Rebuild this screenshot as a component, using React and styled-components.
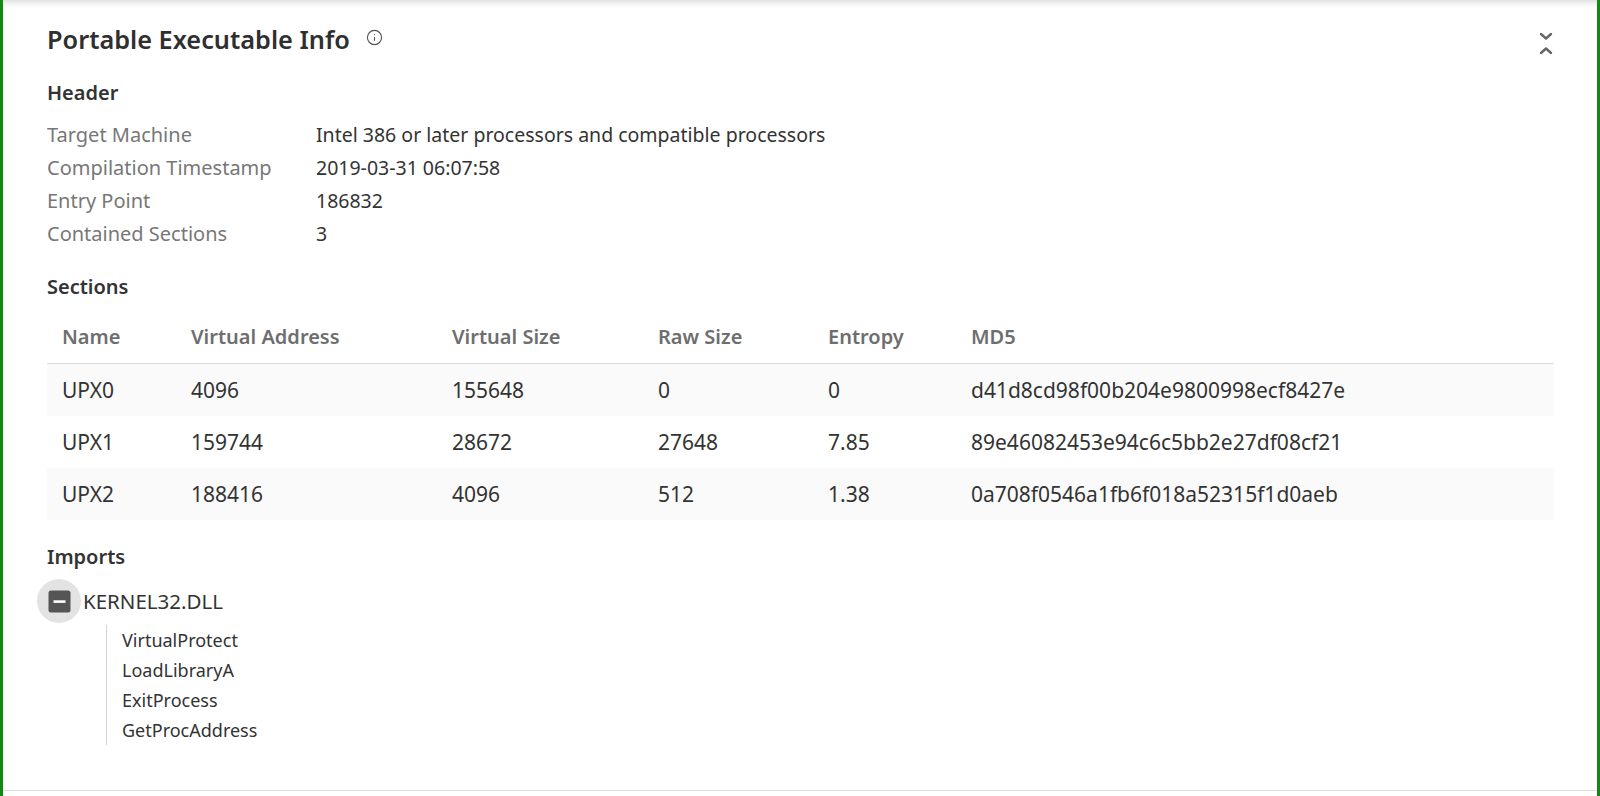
import React from 'react';
import styled, {createGlobalStyle} from 'styled-components';
import {Info} from 'lucide-react';

const GlobalStyle = createGlobalStyle`
  body {
    margin: 0;
    background: #fff;
    font-family: "Noto Sans", "Open Sans", sans-serif;
    color: #333;
  }
  * { box-sizing: border-box; }
`;

const Page = styled.div`
  height: 796px;
  border-left: 3px solid #118a11;
  border-right: 3px solid #118a11;
  overflow: hidden;
`;

const Card = styled.section`
  height: 791px;
  padding: 23px 43px 0 44px;
  border-bottom: 1px solid #dcdcdc;
  box-shadow: inset 0 7px 7px -5px rgba(0, 0, 0, 0.16);
`;

const TitleRow = styled.div`
  display: flex;
  align-items: flex-start;
  justify-content: space-between;
  height: 32px;
`;

const Title = styled.h2`
  display: flex;
  align-items: center;
  gap: 16px;
  margin: 0;
  font-size: 25.3px;
  line-height: 32px;
  font-weight: 600;
  color: #2f2f2f;
`;

const InfoIcon = styled(Info)`
  color: #555;
  margin-top: -4px;
`;

const Toggle = styled.button`
  border: none;
  background: none;
  padding: 0;
  margin-top: 7px;
  display: flex;
  cursor: pointer;
`;

const SectionTitle = styled.h3`
  margin: ${(p) => p.$top}px 0 0;
  font-size: 20px;
  line-height: 26px;
  font-weight: 600;
  color: #333;
`;

const InfoList = styled.dl`
  margin: 12px 0 0;
`;

const InfoRow = styled.div`
  display: grid;
  grid-template-columns: 269px 1fr;
  height: 33px;
  align-items: center;
`;

const Label = styled.dt`
  font-size: 20px;
  color: #777;
`;

const Value = styled.dd`
  margin: 0;
  font-size: 19.5px;
  color: #333;
`;

const Table = styled.div`
  margin-top: 9px;
`;

const TableRow = styled.div`
  display: grid;
  grid-template-columns: 129px 261px 206px 170px 143px 1fr;
  align-items: center;
  height: ${(p) => (p.$head ? '55px' : '52px')};
  background: ${(p) => (p.$shade ? '#fafafa' : '#fff')};
  border-bottom: ${(p) => (p.$head ? '1px solid #dedede' : 'none')};
  font-size: ${(p) => (p.$head ? '20px' : '21px')};
  color: ${(p) => (p.$head ? '#6e6e6e' : '#333')};
  font-weight: ${(p) => (p.$head ? 600 : 400)};
`;

const Cell = styled.div`
  padding-left: 15px;
`;

const ImportHead = styled.div`
  display: flex;
  align-items: center;
  margin: 9px 0 0 -10px;
  font-size: 20.5px;
  color: #333;
`;

const CircleButton = styled.button`
  width: 44px;
  height: 44px;
  border-radius: 50%;
  border: none;
  background: #e3e3e3;
  display: flex;
  align-items: center;
  justify-content: center;
  padding: 0;
  margin-right: 2px;
  cursor: pointer;
`;

const FuncList = styled.ul`
  list-style: none;
  margin: 2px 0 0 59px;
  padding: 0 0 0 15px;
  border-left: 1px solid #d4d4d4;
`;

const FuncItem = styled.li`
  height: 30px;
  line-height: 30px;
  font-size: 18px;
  color: #333;
`;

const header = [
  ['Target Machine', 'Intel 386 or later processors and compatible processors'],
  ['Compilation Timestamp', '2019-03-31 06:07:58'],
  ['Entry Point', '186832'],
  ['Contained Sections', '3'],
];

const columns = ['Name', 'Virtual Address', 'Virtual Size', 'Raw Size', 'Entropy', 'MD5'];

const sections = [
  ['UPX0', '4096', '155648', '0', '0', 'd41d8cd98f00b204e9800998ecf8427e'],
  ['UPX1', '159744', '28672', '27648', '7.85', '89e46082453e94c6c5bb2e27df08cf21'],
  ['UPX2', '188416', '4096', '512', '1.38', '0a708f0546a1fb6f018a52315f1d0aeb'],
];

const imports = ['VirtualProtect', 'LoadLibraryA', 'ExitProcess', 'GetProcAddress'];

const Chevrons = () => (
  <svg width="16" height="28" viewBox="0 0 16 28" fill="none" stroke="#666" strokeWidth="2.4" strokeLinecap="round" strokeLinejoin="round">
    <path d="M3 4l5 4.5L13 4" />
    <path d="M3 23l5-4.5 5 4.5" />
  </svg>
);

const MinusBox = () => (
  <svg width="23" height="23" viewBox="0 0 23 23">
    <rect x="0.5" y="0.5" width="22" height="22" rx="2.5" fill="#555" />
    <rect x="5.5" y="10.3" width="12" height="2.6" fill="#fff" />
  </svg>
);

export default function App() {
  return (
    <>
      <GlobalStyle />
      <Page>
        <Card>
          <TitleRow>
            <Title>
              Portable Executable Info
              <InfoIcon size={17} strokeWidth={1.6} />
            </Title>
            <Toggle aria-label="collapse">
              <Chevrons />
            </Toggle>
          </TitleRow>

          <SectionTitle $top={25}>Header</SectionTitle>
          <InfoList>
            {header.map(([k, v]) => (
              <InfoRow key={k}>
                <Label>{k}</Label>
                <Value>{v}</Value>
              </InfoRow>
            ))}
          </InfoList>

          <SectionTitle $top={24}>Sections</SectionTitle>
          <Table>
            <TableRow $head>
              {columns.map((c) => (
                <Cell key={c}>{c}</Cell>
              ))}
            </TableRow>
            {sections.map((row, i) => (
              <TableRow key={row[0]} $shade={i % 2 === 0}>
                {row.map((v, j) => (
                  <Cell key={j}>{v}</Cell>
                ))}
              </TableRow>
            ))}
          </Table>

          <SectionTitle $top={24}>Imports</SectionTitle>
          <ImportHead>
            <CircleButton aria-label="collapse KERNEL32.DLL">
              <MinusBox />
            </CircleButton>
            KERNEL32.DLL
          </ImportHead>
          <FuncList>
            {imports.map((f) => (
              <FuncItem key={f}>{f}</FuncItem>
            ))}
          </FuncList>
        </Card>
      </Page>
    </>
  );
}
